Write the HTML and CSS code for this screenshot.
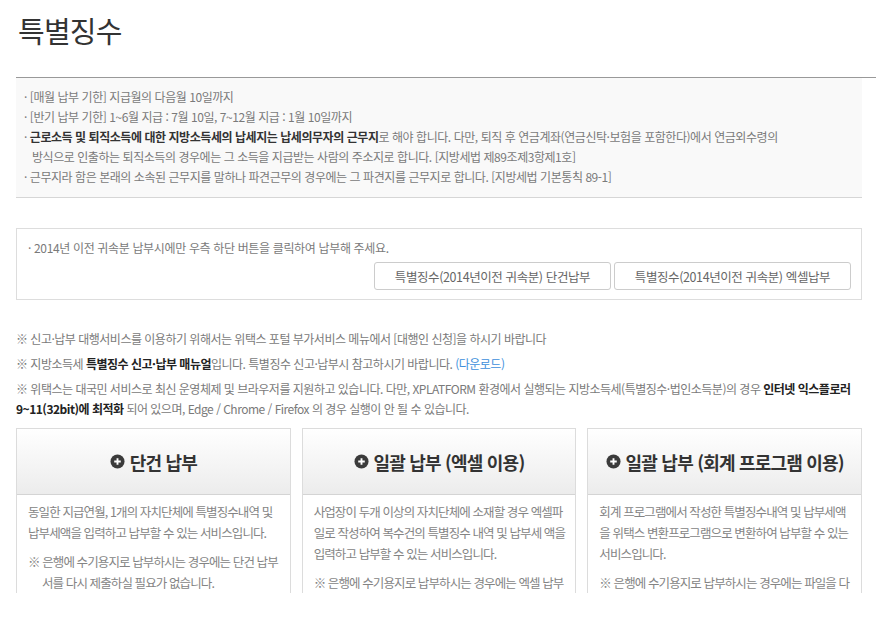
FILE: index.html
```html
<!DOCTYPE html>
<html lang="ko">
<head>
    <meta charset="UTF-8">
    <meta name="viewport" content="width=device-width, initial-scale=1.0">
    <title>특별징수</title>
    <link rel="stylesheet" href="styles.css">
</head>
<body>
<div class="page">
    <div class="title-bar">
        <h1>특별징수</h1>
    </div>

    <ul class="guide">
        <li>· [매월 납부 기한] 지급월의 다음월 10일까지</li>
        <li>· [반기 납부 기한] 1~6월 지급 : 7월 10일, 7~12월 지급 : 1월 10일까지</li>
        <li>· <b>근로소득 및 퇴직소득에 대한 지방소득세의 납세지는 납세의무자의 근무지</b>로 해야 합니다. 다만, 퇴직 후 연금계좌(연금신탁·보험을 포함한다)에서 연금외수령의<br>방식으로 인출하는 퇴직소득의 경우에는 그 소득을 지급받는 사람의 주소지로 합니다. [지방세법 제89조제3항제1호]</li>
        <li>· 근무지라 함은 본래의 소속된 근무지를 말하나 파견근무의 경우에는 그 파견지를 근무지로 합니다. [지방세법 기본통칙 89-1]</li>
    </ul>

    <div class="old-box">
        <p>· 2014년 이전 귀속분 납부시에만 우측 하단 버튼을 클릭하여 납부해 주세요.</p>
        <div class="old-buttons">
            <button class="btn-old">특별징수(2014년이전 귀속분) 단건납부</button>
            <button class="btn-old">특별징수(2014년이전 귀속분) 엑셀납부</button>
        </div>
    </div>

    <div class="notes">
        <p>※ 신고·납부 대행서비스를 이용하기 위해서는 위택스 포털 부가서비스 메뉴에서 [대행인 신청]을 하시기 바랍니다</p>
        <p>※ 지방소득세 <b>특별징수 신고·납부 매뉴얼</b>입니다. 특별징수 신고·납부시 참고하시기 바랍니다. <a href="#" class="down">(다운로드)</a></p>
        <p>※ 위택스는 대국민 서비스로 최신 운영체제 및 브라우저를 지원하고 있습니다. 다만, XPLATFORM 환경에서 실행되는 지방소득세(특별징수·법인소득분)의 경우 <b>인터넷 익스플로러 9~11(32bit)에 최적화</b> 되어 있으며, Edge / Chrome / Firefox 의 경우 실행이 안 될 수 있습니다.</p>
    </div>

    <div class="cards">
        <div class="card">
            <div class="card-head">
                <svg class="plus" viewBox="0 0 16 16"><circle cx="8" cy="8" r="7.5" fill="#3b3b3b"/><path d="M8 4.5v7M4.5 8h7" stroke="#fff" stroke-width="2"/></svg>
                <span>단건 납부</span>
            </div>
            <div class="card-body">
                <p>동일한 지급연월, 1개의 자치단체에 특별징수내역 및 납부세액을 입력하고 납부할 수 있는 서비스입니다.</p>
                <p class="mark">※ 은행에 수기용지로 납부하시는 경우에는 단건 납부서를 다시 제출하실 필요가 없습니다.</p>
            </div>
        </div>
        <div class="card">
            <div class="card-head">
                <svg class="plus" viewBox="0 0 16 16"><circle cx="8" cy="8" r="7.5" fill="#3b3b3b"/><path d="M8 4.5v7M4.5 8h7" stroke="#fff" stroke-width="2"/></svg>
                <span>일괄 납부 (엑셀 이용)</span>
            </div>
            <div class="card-body">
                <p>사업장이 두개 이상의 자치단체에 소재할 경우 엑셀파일로 작성하여 복수건의 특별징수 내역 및 납부세 액을 입력하고 납부할 수 있는 서비스입니다.</p>
                <p class="mark">※ 은행에 수기용지로 납부하시는 경우에는 엑셀 납부서를 다시 제출하실 필요가 없습니다.</p>
            </div>
        </div>
        <div class="card">
            <div class="card-head">
                <svg class="plus" viewBox="0 0 16 16"><circle cx="8" cy="8" r="7.5" fill="#3b3b3b"/><path d="M8 4.5v7M4.5 8h7" stroke="#fff" stroke-width="2"/></svg>
                <span>일괄 납부 (회계 프로그램 이용)</span>
            </div>
            <div class="card-body">
                <p>회계 프로그램에서 작성한 특별징수내역 및 납부세액을 위택스 변환프로그램으로 변환하여 납부할 수 있는 서비스입니다.</p>
                <p class="mark">※ 은행에 수기용지로 납부하시는 경우에는 파일을 다시 제출하실 필요가 없습니다.</p>
            </div>
        </div>
    </div>
</div>
</body>
</html>
```

FILE: styles.css
```css
body {
    margin: 0;
    font-family: "Noto Sans CJK KR", "Noto Sans", sans-serif;
    color: #7a7a7a;
    background: #fff;
}
.page {
    width: 846px;
    padding: 0 0 0 16px;
}
.title-bar {
    width: 860px;
    padding-top: 10px;
    padding-bottom: 27px;
    border-bottom: 1px solid #999;
}
h1 {
    margin: 0 0 0 2px;
    font-size: 29px;
    line-height: 40px;
    font-weight: 400;
    color: #333;
    letter-spacing: -0.8px;
}
.guide {
    list-style: none;
    margin: 0;
    padding: 9px 8px 10px 8px;
    background: #f9f9f9;
    border-bottom: 1px solid #d6d6d6;
    font-size: 12px;
    line-height: 20px;
    letter-spacing: -0.45px;
}
.guide li {
    padding-left: 8px;
    text-indent: -8px;
}
.guide b {
    color: #333;
}
.old-box {
    margin-top: 30px;
    border: 1px solid #ddd;
    padding: 9px 10px 9px 11px;
    font-size: 12px;
    line-height: 20px;
    letter-spacing: -0.35px;
}
.old-box p {
    margin: 0;
}
.old-buttons {
    display: flex;
    justify-content: flex-end;
    gap: 3px;
    margin-top: 4px;
}
.btn-old {
    width: 237px;
    height: 28px;
    margin: 0;
    padding: 0;
    border: 1px solid #ccc;
    border-radius: 3px;
    background: #fff;
    color: #666;
    font-family: inherit;
    font-size: 12.5px;
    letter-spacing: -0.4px;
    cursor: pointer;
}
.notes {
    margin-top: 29px;
    font-size: 12px;
    line-height: 20px;
    letter-spacing: -0.5px;
}
.notes p {
    margin: 0 0 5px;
}
.notes b {
    color: #222;
}
.down {
    color: #3d8fdc;
    text-decoration: none;
}
.cards {
    display: grid;
    grid-template-columns: repeat(3, 1fr);
    column-gap: 11px;
    margin-top: 9px;
    height: 165px;
    overflow: hidden;
}
.card {
    border: 1px solid #dcdcdc;
    background: #fff;
}
.card-head {
    height: 65px;
    display: flex;
    align-items: center;
    justify-content: center;
    gap: 5px;
    background: linear-gradient(#fff, #ececec);
    border-bottom: 1px solid #d4d4d4;
    font-size: 18px;
    font-weight: 700;
    color: #333;
    letter-spacing: -0.8px;
}
.plus {
    width: 15px;
    height: 15px;
}
.card-body {
    padding: 6px 7px 0 11px;
    font-size: 12.5px;
    line-height: 21px;
    letter-spacing: -0.9px;
    color: #848484;
}
.card-body p {
    margin: 0 0 8px;
}
.card-body .mark {
    padding-left: 14px;
    text-indent: -14px;
}
```
